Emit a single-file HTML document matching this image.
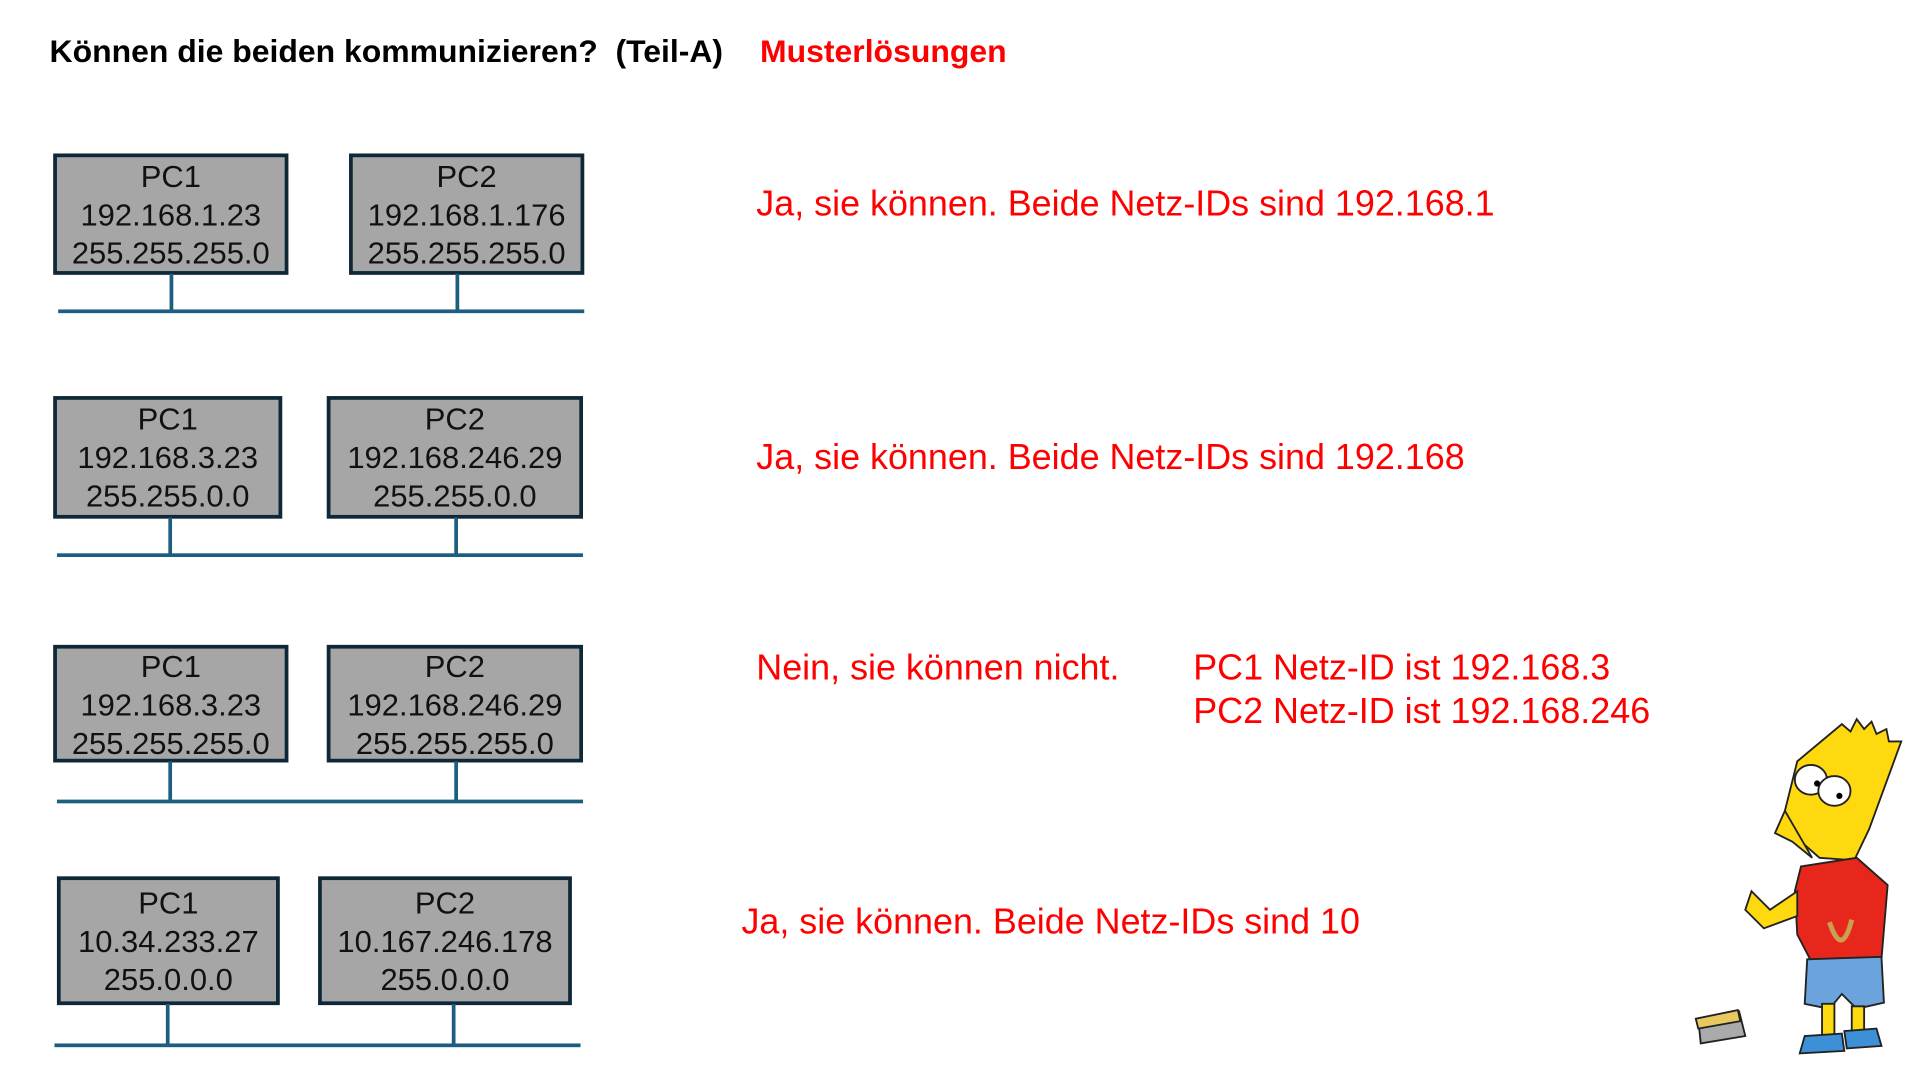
<!DOCTYPE html>
<html><head><meta charset="utf-8"><style>
html,body{margin:0;padding:0;background:#fff;width:1931px;height:1075px;overflow:hidden}
#w{position:absolute;left:0;top:0;width:1560px;height:869px;transform:scale(1.2378);transform-origin:0 0;font-family:"Liberation Sans",Arial,sans-serif}
.t{position:absolute;white-space:nowrap}
.b{position:absolute;box-sizing:border-box;border:3px solid #0e2838;background:#a6a6a6;text-align:center;font-size:25px;line-height:31px;color:#111;padding-top:1px}
.h{position:absolute;height:3px;background:#1c5e80}
.v{position:absolute;width:3px;background:#1c5e80}
.r{position:absolute;white-space:nowrap;color:#f00;font-size:29px;line-height:32px}
</style></head><body><div id="w">
<div class="t" style="left:40px;top:27px;font-size:25.8px;font-weight:bold;line-height:30px;color:#000">Können die beiden kommunizieren?&nbsp; (Teil-A)</div>
<div class="t" style="left:614px;top:27px;font-size:25.8px;font-weight:bold;line-height:30px;color:#f00">Musterlösungen</div>

<div class="b" style="left:43px;top:124px;width:190px;height:98px">PC1<br>192.168.1.23<br>255.255.255.0</div>
<div class="b" style="left:282px;top:124px;width:190px;height:98px">PC2<br>192.168.1.176<br>255.255.255.0</div>
<div class="v" style="left:137px;top:221px;height:30px"></div>
<div class="v" style="left:368px;top:221px;height:30px"></div>
<div class="h" style="left:47px;top:250px;width:425px"></div>
<div class="r" style="left:611px;top:149px">Ja, sie können. Beide Netz-IDs sind 192.168.1</div>

<div class="b" style="left:43px;top:320px;width:185px;height:99px">PC1<br>192.168.3.23<br>255.255.0.0</div>
<div class="b" style="left:264px;top:320px;width:207px;height:99px">PC2<br>192.168.246.29<br>255.255.0.0</div>
<div class="v" style="left:136px;top:418px;height:30px"></div>
<div class="v" style="left:367px;top:418px;height:30px"></div>
<div class="h" style="left:46px;top:447px;width:425px"></div>
<div class="r" style="left:611px;top:354px">Ja, sie können. Beide Netz-IDs sind 192.168</div>

<div class="b" style="left:43px;top:521px;width:190px;height:95px;padding-top:0">PC1<br>192.168.3.23<br>255.255.255.0</div>
<div class="b" style="left:264px;top:521px;width:207px;height:95px;padding-top:0">PC2<br>192.168.246.29<br>255.255.255.0</div>
<div class="v" style="left:136px;top:615px;height:32px"></div>
<div class="v" style="left:367px;top:615px;height:32px"></div>
<div class="h" style="left:46px;top:646px;width:425px"></div>
<div class="r" style="left:611px;top:524px">Nein, sie können nicht.</div>
<div class="r" style="left:964px;top:524px">PC1 Netz-ID ist 192.168.3</div>
<div class="r" style="left:964px;top:559px">PC2 Netz-ID ist 192.168.246</div>

<div class="b" style="left:46px;top:708px;width:180px;height:104px;padding-top:4px">PC1<br>10.34.233.27<br>255.0.0.0</div>
<div class="b" style="left:257px;top:708px;width:205px;height:104px;padding-top:4px">PC2<br>10.167.246.178<br>255.0.0.0</div>
<div class="v" style="left:134px;top:811px;height:33px"></div>
<div class="v" style="left:365px;top:811px;height:33px"></div>
<div class="h" style="left:44px;top:843px;width:425px"></div>
<div class="r" style="left:599px;top:729px">Ja, sie können. Beide Netz-IDs sind 10</div>

<svg style="position:absolute;left:1360px;top:575px" width="190" height="290" viewBox="0 0 190 290">
<g stroke="#222" stroke-width="1.5">
<path d="M12 248 L45 242 L50 262 L14 268 Z" fill="#aaa"/>
<path d="M10 248 L44 241 L46 250 L12 256 Z" fill="#e8c860"/>
<path d="M128 10 L135 16 L140 6 L146 14 L152 8 L156 18 L164 14 L166 24 L176 24 L150 95 L138 120 L110 118 L95 105 L82 80 L92 40 Z" fill="#ffd90f"/>
<path d="M82 80 L74 98 L88 105 L104 118 Z" fill="#ffd90f"/>
<ellipse cx="103" cy="55" rx="13" ry="12" fill="#fff"/>
<ellipse cx="122" cy="64" rx="13" ry="12" fill="#fff"/>
<path d="M95 125 L140 118 L165 140 L160 200 L105 205 L92 180 L90 145 Z" fill="#e8271c"/>
<path d="M92 145 L70 160 L55 145 L50 160 L65 175 L92 165 Z" fill="#ffd90f"/>
<path d="M100 200 L160 198 L162 235 L140 240 L128 228 L118 240 L98 236 Z" fill="#6ba4dd"/>
<path d="M112 236 L122 236 L122 262 L112 262 Z M136 238 L146 238 L146 260 L136 260 Z" fill="#ffd90f"/>
<path d="M98 262 L128 260 L130 274 L94 276 Z M130 258 L156 256 L160 270 L132 272 Z" fill="#3d8fd6"/>
</g>
<circle cx="108" cy="58" r="2.5" fill="#000"/><circle cx="126" cy="68" r="2.5" fill="#000"/>
<path d="M118 170 Q128 200 136 168" stroke="#c9a050" stroke-width="4" fill="none"/>
</svg>
</div></body></html>
